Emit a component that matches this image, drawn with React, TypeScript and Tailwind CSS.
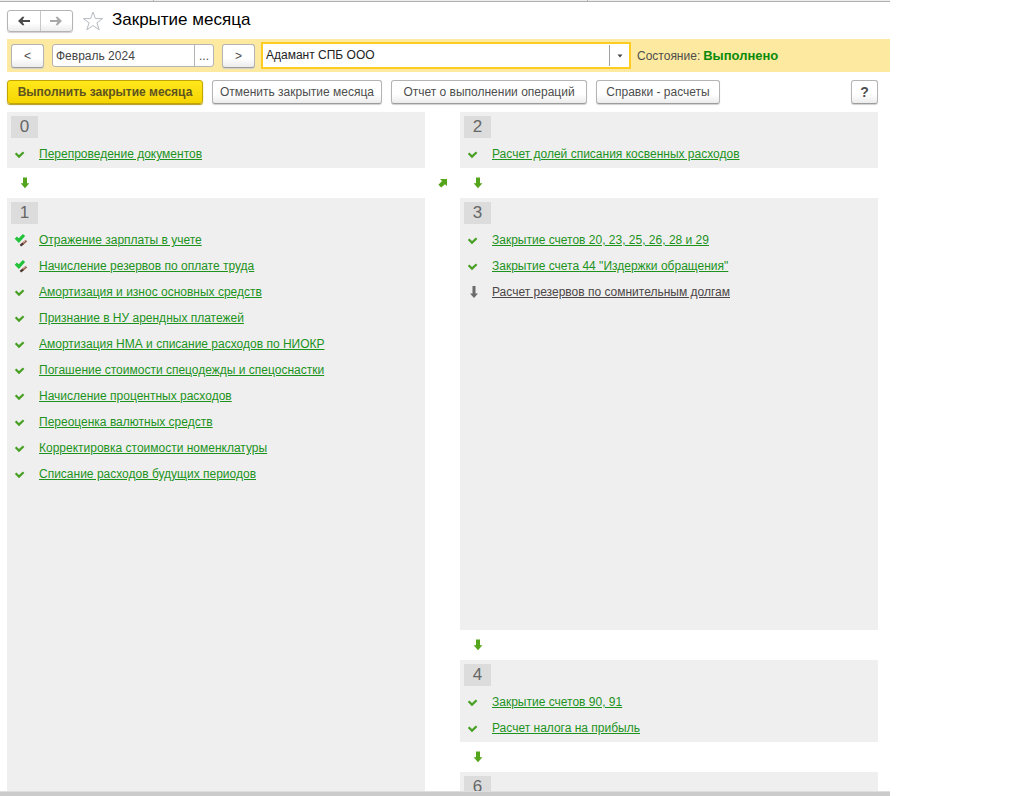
import { useState } from "react";
import clsx from "clsx";

type Status = "done" | "manual" | "pending";

type Operation = {
  title: string;
  status: Status;
};

type StageProps = {
  number: number;
  operations: Operation[];
  className?: string;
};

const stage0: Operation[] = [
  { title: "Перепроведение документов", status: "done" },
];

const stage1: Operation[] = [
  { title: "Отражение зарплаты в учете", status: "manual" },
  { title: "Начисление резервов по оплате труда", status: "manual" },
  { title: "Амортизация и износ основных средств", status: "done" },
  { title: "Признание в НУ арендных платежей", status: "done" },
  { title: "Амортизация НМА и списание расходов по НИОКР", status: "done" },
  { title: "Погашение стоимости спецодежды и спецоснастки", status: "done" },
  { title: "Начисление процентных расходов", status: "done" },
  { title: "Переоценка валютных средств", status: "done" },
  { title: "Корректировка стоимости номенклатуры", status: "done" },
  { title: "Списание расходов будущих периодов", status: "done" },
];

const stage2: Operation[] = [
  { title: "Расчет долей списания косвенных расходов", status: "done" },
];

const stage3: Operation[] = [
  { title: "Закрытие счетов 20, 23, 25, 26, 28 и 29", status: "done" },
  { title: 'Закрытие счета 44 "Издержки обращения"', status: "done" },
  { title: "Расчет резервов по сомнительным долгам", status: "pending" },
];

const stage4: Operation[] = [
  { title: "Закрытие счетов 90, 91", status: "done" },
  { title: "Расчет налога на прибыль", status: "done" },
];

const buttonStyle =
  "h-6 rounded-[3px] border border-[#b4b4b4] border-b-[#9c9c9c] bg-linear-to-b from-white from-60% to-[#ececec] text-[#4d4d4d] shadow-[0_1px_1px_#d0d0d0]";

const StatusIcon = ({ status }: { status: Status }) => {
  if (status === "manual") {
    return (
      <svg width="14" height="14" viewBox="0 0 14 14" aria-hidden="true">
        <path d="M1.8 4.6 4.8 7.6 10 2" fill="none" stroke="#22c23a" strokeWidth="3.2" />
        <path d="M12.4 7.6 8.2 11.2" stroke="#96644e" strokeWidth="2.4" />
        <path d="M11.4 7.6 9.2 9.4" stroke="#dcc4b6" />
        <path d="M9 10.6 6.4 12.6" stroke="#4b3732" strokeWidth="2.4" />
      </svg>
    );
  }
  if (status === "pending") {
    return (
      <svg width="14" height="14" viewBox="0 0 14 14" aria-hidden="true">
        <path d="M5.5 1h3v7.5H11L7 13 3 8.5h2.5Z" fill="#6b6b6b" />
      </svg>
    );
  }
  return (
    <svg width="14" height="14" viewBox="0 0 14 14" aria-hidden="true">
      <path d="M1.6 6.2 5 9.6 9.6 5.2" fill="none" stroke="#47a023" strokeWidth="2.2" />
    </svg>
  );
};

const DownArrow = () => (
  <div className="flex h-[30px] shrink-0 items-center pl-[13px]">
    <svg width="10" height="12" viewBox="0 0 10 12" aria-hidden="true">
      <path d="M3 0.6h4v5.6h2.4L5 11.2 0.6 6.2H3Z" fill="#55a51c" />
    </svg>
  </div>
);

const Stage = ({ number, operations, className }: StageProps) => {
  return (
    <section className={clsx("shrink-0 bg-[#efefef] px-1 pt-1 pb-px", className)}>
      <h2 className="flex h-[22px] w-[27px] items-center justify-center bg-[#dcdcdc] text-[17px] text-[#666]">
        {number}
      </h2>
      <ul className="pt-[3px]">
        {operations.map((op) => (
          <li key={op.title} className="flex h-[26px] items-center pl-[3px]">
            <StatusIcon status={op.status} />
            <a
              href="#"
              className={clsx(
                "ml-[11px] whitespace-nowrap underline underline-offset-1",
                op.status === "pending" ? "text-[#4d4646]" : "text-[#1d931d]"
              )}
            >
              {op.title}
            </a>
          </li>
        ))}
      </ul>
    </section>
  );
};

const App = () => {
  const [period, setPeriod] = useState("Февраль 2024");

  return (
    <div className="h-screen bg-white font-['Liberation_Sans',Arial,sans-serif] text-xs text-[#4d4d4d]">
      <div className="mr-[134px] flex h-full flex-col">
        {/* lower edge of the window tabs */}
        <div className="flex h-[2px] shrink-0 border-b border-[#b0b0b0] bg-[#ececec]">
          <span className="w-[154px] border-r border-[#b0b0b0]" />
          <span className="w-[434px] border-r border-[#b0b0b0]" />
        </div>

        <header className="flex h-[37px] shrink-0 items-center pl-[7px]">
          <div className="flex h-[22px] w-[66px] rounded-[3px] border border-[#b4b4b4] bg-linear-to-b from-white from-60% to-[#ececec] shadow-[0_1px_1px_#d0d0d0]">
            <button aria-label="Назад" className="flex flex-1 items-center justify-center border-r border-[#c8c8c8]">
              <svg width="14" height="10" viewBox="0 0 14 10" aria-hidden="true">
                <path d="M1 5 5.4 0.8H7.4L5.6 4H13V6H5.6L7.4 9.2H5.4Z" fill="#4a4a4a" />
              </svg>
            </button>
            <button aria-label="Вперед" className="flex flex-1 items-center justify-center">
              <svg width="14" height="10" viewBox="0 0 14 10" aria-hidden="true">
                <path d="M13 5 8.6 0.8H6.6L8.4 4H1V6H8.4L6.6 9.2H8.6Z" fill="#a9a9a9" />
              </svg>
            </button>
          </div>
          <button aria-label="В избранное" className="ml-[9px]">
            <svg width="22" height="20" viewBox="0 0 22 20" aria-hidden="true">
              <path
                d="M11 1 13.4 7.6H20.6L14.9 11.8 17.2 18.8 11 14.6 4.8 18.8 7.1 11.8 1.4 7.6H8.6Z"
                fill="#fff"
                stroke="#b5bcc2"
              />
            </svg>
          </button>
          <h1 className="ml-2 text-[17px] text-black">Закрытие месяца</h1>
        </header>

        <div className="ml-[7px] flex h-[33px] shrink-0 items-center bg-[#fdeaa0] pl-1">
          <button aria-label="Предыдущий месяц" className={clsx(buttonStyle, "w-[33px]")}>
            &lt;
          </button>
          <div className="ml-2 flex h-[23px] w-[162px] rounded-[3px] border border-[#b4b4b4] bg-white">
            <input
              aria-label="Период"
              value={period}
              onChange={(e) => setPeriod(e.target.value)}
              className="min-w-0 flex-1 pl-[3px] text-[#444] outline-none"
            />
            <button aria-label="Выбрать период" className="w-[19px] border-l border-[#b4b4b4]">
              ...
            </button>
          </div>
          <button aria-label="Следующий месяц" className={clsx(buttonStyle, "ml-2 w-[33px]")}>
            &gt;
          </button>
          <div className="relative ml-[6px] h-[27px] w-[370px] border-2 border-[#ffcc22] bg-white">
            <select
              aria-label="Организация"
              className="h-full w-full appearance-none pb-px pl-[3px] text-[#222] outline-none"
            >
              <option>Адамант СПБ ООО</option>
            </select>
            <span className="pointer-events-none absolute inset-y-px right-0 flex w-5 items-center justify-center border-l border-[#a0a0a0]">
              <svg width="6" height="4" viewBox="0 0 6 4" aria-hidden="true">
                <path d="M0.5 0.5h5L3 3.5Z" fill="#444" />
              </svg>
            </span>
          </div>
          <span className="ml-[6px]">Состояние:</span>
          <strong className="ml-[3px] text-[13px] text-[#0a8a0a]">Выполнено</strong>
        </div>

        <div className="flex h-10 shrink-0 items-center gap-[9px] pr-3 pl-[7px]">
          <button className="h-6 w-[196px] rounded-[3px] border border-[#c2a500] bg-linear-to-b from-[#ffe81a] to-[#f5d500] font-bold text-[#5f5320] shadow-[0_1px_1px_#b09a20]">
            Выполнить закрытие месяца
          </button>
          <button className={clsx(buttonStyle, "w-[170px]")}>Отменить закрытие месяца</button>
          <button className={clsx(buttonStyle, "w-[196px]")}>Отчет о выполнении операций</button>
          <button className={clsx(buttonStyle, "w-[124px]")}>Справки - расчеты</button>
          <button aria-label="Справка" className={clsx(buttonStyle, "ml-auto w-[27px] text-sm font-bold")}>
            ?
          </button>
        </div>

        <main className="flex min-h-0 flex-1 overflow-hidden pr-3 pl-[7px]">
          <div className="flex min-w-0 flex-1 flex-col">
            <Stage number={0} operations={stage0} />
            <DownArrow />
            <Stage number={1} operations={stage1} className="flex-1" />
          </div>
          <div className="w-[35px] shrink-0 pt-14">
            <div className="flex h-[30px] items-center justify-center">
              <svg width="10" height="10" viewBox="0 0 10 10" aria-hidden="true">
                <path d="M2 1H9V8L7 6.2 3.2 9.6 0.4 6.8 4 3Z" fill="#55a51c" />
              </svg>
            </div>
          </div>
          <div className="flex min-w-0 flex-1 flex-col">
            <Stage number={2} operations={stage2} />
            <DownArrow />
            <Stage number={3} operations={stage3} className="min-h-[432px]" />
            <DownArrow />
            <Stage number={4} operations={stage4} />
            <DownArrow />
            <Stage number={6} operations={[]} />
          </div>
        </main>
        <div className="h-[5px] shrink-0 border-t border-[#dedede] bg-[#cbcbcb]" />
      </div>
    </div>
  );
};

export default App;
